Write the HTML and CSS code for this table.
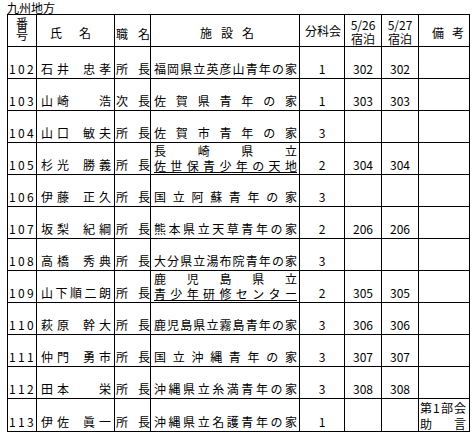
FILE: index.html
```html
<!DOCTYPE html>
<html lang="ja">
<head>
<meta charset="utf-8">
<title>九州地方</title>
<link rel="stylesheet" href="styles.css">
</head>
<body>
<div class="page">
  <div class="title">九州地方</div>
  <table class="roster">
    <colgroup>
      <col class="w-no"><col class="w-name"><col class="w-job"><col class="w-fac"><col class="w-sec"><col class="w-day"><col class="w-day"><col class="w-note">
    </colgroup>
    <thead>
      <tr>
        <th class="h-no"><div>番</div><div>号</div></th>
        <th class="h-name">氏名</th>
        <th class="h-job">職名</th>
        <th class="h-fac">施設名</th>
        <th class="h-sec">分科会</th>
        <th class="h-day"><div>5/26</div><div>宿泊</div></th>
        <th class="h-day"><div>5/27</div><div>宿泊</div></th>
        <th class="h-note">備考</th>
      </tr>
    </thead>
    <tbody>
      <tr>
        <td class="no">102</td>
        <td class="name"><div class="d"><span>石</span><span>井</span><i class="sp"></i><span>忠</span><span>孝</span></div></td>
        <td class="job">所長</td>
        <td class="fac">福岡県立英彦山青年の家</td>
        <td class="c">1</td><td class="c">302</td><td class="c">302</td><td></td>
      </tr>
      <tr>
        <td class="no">103</td>
        <td class="name"><div class="d"><span>山</span><span>崎</span><i class="sp"></i><i class="bl"></i><span>浩</span></div></td>
        <td class="job">次長</td>
        <td class="fac">佐賀県青年の家</td>
        <td class="c">1</td><td class="c">303</td><td class="c">303</td><td></td>
      </tr>
      <tr>
        <td class="no">104</td>
        <td class="name"><div class="d"><span>山</span><span>口</span><i class="sp"></i><span>敏</span><span>夫</span></div></td>
        <td class="job">所長</td>
        <td class="fac">佐賀市青年の家</td>
        <td class="c">3</td><td></td><td></td><td></td>
      </tr>
      <tr>
        <td class="no">105</td>
        <td class="name"><div class="d"><span>杉</span><span>光</span><i class="sp"></i><span>勝</span><span>義</span></div></td>
        <td class="job">所長</td>
        <td class="fac two"><div>長崎県立</div><div class="ul">佐世保青少年の天地</div></td>
        <td class="c">2</td><td class="c">304</td><td class="c">304</td><td></td>
      </tr>
      <tr>
        <td class="no">106</td>
        <td class="name"><div class="d"><span>伊</span><span>藤</span><i class="sp"></i><span>正</span><span>久</span></div></td>
        <td class="job">所長</td>
        <td class="fac">国立阿蘇青年の家</td>
        <td class="c">3</td><td></td><td></td><td></td>
      </tr>
      <tr>
        <td class="no">107</td>
        <td class="name"><div class="d"><span>坂</span><span>梨</span><i class="sp"></i><span>紀</span><span>綱</span></div></td>
        <td class="job">所長</td>
        <td class="fac">熊本県立天草青年の家</td>
        <td class="c">2</td><td class="c">206</td><td class="c">206</td><td></td>
      </tr>
      <tr>
        <td class="no">108</td>
        <td class="name"><div class="d"><span>高</span><span>橋</span><i class="sp"></i><span>秀</span><span>典</span></div></td>
        <td class="job">所長</td>
        <td class="fac">大分県立湯布院青年の家</td>
        <td class="c">3</td><td></td><td></td><td></td>
      </tr>
      <tr>
        <td class="no">109</td>
        <td class="name"><div class="d"><span>山</span><span>下</span><span>順</span><span>二</span><span>朗</span></div></td>
        <td class="job">所長</td>
        <td class="fac two"><div>鹿児島県立</div><div class="ul">青少年研修センター</div></td>
        <td class="c">2</td><td class="c">305</td><td class="c">305</td><td></td>
      </tr>
      <tr>
        <td class="no">110</td>
        <td class="name"><div class="d"><span>萩</span><span>原</span><i class="sp"></i><span>幹</span><span>大</span></div></td>
        <td class="job">所長</td>
        <td class="fac">鹿児島県立霧島青年の家</td>
        <td class="c">3</td><td class="c">306</td><td class="c">306</td><td></td>
      </tr>
      <tr>
        <td class="no">111</td>
        <td class="name"><div class="d"><span>仲</span><span>門</span><i class="sp"></i><span>勇</span><span>市</span></div></td>
        <td class="job">所長</td>
        <td class="fac">国立沖縄青年の家</td>
        <td class="c">3</td><td class="c">307</td><td class="c">307</td><td></td>
      </tr>
      <tr>
        <td class="no">112</td>
        <td class="name"><div class="d"><span>田</span><span>本</span><i class="sp"></i><i class="bl"></i><span>栄</span></div></td>
        <td class="job">所長</td>
        <td class="fac">沖縄県立糸満青年の家</td>
        <td class="c">3</td><td class="c">308</td><td class="c">308</td><td></td>
      </tr>
      <tr>
        <td class="no">113</td>
        <td class="name"><div class="d"><span>伊</span><span>佐</span><i class="sp"></i><span>眞</span><span>一</span></div></td>
        <td class="job">所長</td>
        <td class="fac">沖縄県立名護青年の家</td>
        <td class="c">1</td><td></td><td></td>
        <td class="note two"><div>第1部会</div><div>助言</div></td>
      </tr>
    </tbody>
  </table>
</div>
</body>
</html>
```

FILE: styles.css
```css
body {
  margin: 0;
  background: #fff;
  color: #000;
  font-family: "Noto Sans CJK JP", "Liberation Sans", sans-serif;
  font-size: 12px;
}

.page {
  padding: 2px 0 0 7px;
}

.title {
  height: 12px;
  line-height: 12px;
}

.roster {
  border-collapse: collapse;
  table-layout: fixed;
  width: 463px;
}

.w-no { width: 29px; }
.w-name { width: 78px; }
.w-job { width: 36px; }
.w-fac { width: 149px; }
.w-sec { width: 45px; }
.w-day { width: 37px; }
.w-note { width: 51px; }

.roster tr {
  height: 32px;
}

.roster th,
.roster td {
  border: 1px solid #000;
  padding: 0 0 2px;
  vertical-align: bottom;
  line-height: 14px;
  font-weight: normal;
  white-space: nowrap;
  overflow: hidden;
}

/* header */
.roster th {
  padding-bottom: 6px;
  text-align: justify;
  text-align-last: justify;
}
.roster th.h-no {
  vertical-align: middle;
  line-height: 12px;
  padding: 0 0 4px;
  text-align: center;
  text-align-last: center;
}
.roster th.h-name {
  padding-left: 13px;
  padding-right: 23px;
}
.roster th.h-job {
  padding-left: 1px;
  padding-bottom: 5px;
}
.roster th.h-fac {
  padding-left: 49px;
  padding-right: 45px;
}
.roster th.h-sec {
  vertical-align: middle;
  text-align: center;
  text-align-last: center;
  padding: 0 0 0 2px;
}
.roster th.h-day {
  text-align: center;
  text-align-last: center;
  padding: 0;
  line-height: 14px;
}
.roster th.h-note {
  padding-left: 13px;
  padding-right: 5px;
}

/* body cells */
.roster td.no {
  padding-left: 1px;
  letter-spacing: 2.3px;
}

.roster td.name {
  padding: 0 3px 2px 4px;
}
.name .d {
  display: flex;
  justify-content: space-between;
}
.name .sp {
  width: 6px;
}
.name .bl {
  width: 12px;
}

.roster td.job {
  padding: 0 0 2px 1px;
  text-align: justify;
  text-align-last: justify;
}

.roster td.fac {
  padding: 0 2px 2px 3px;
  text-align: justify;
  text-align-last: justify;
}

.roster td.two {
  line-height: 15px;
  padding-bottom: 0;
  vertical-align: top;
}

.ul {
  text-decoration: underline;
}

.roster td.note {
  padding: 1px 3px 0 1px;
  line-height: 15.5px;
  text-align: justify;
  text-align-last: justify;
}

.roster td.c {
  text-align: center;
}
```
